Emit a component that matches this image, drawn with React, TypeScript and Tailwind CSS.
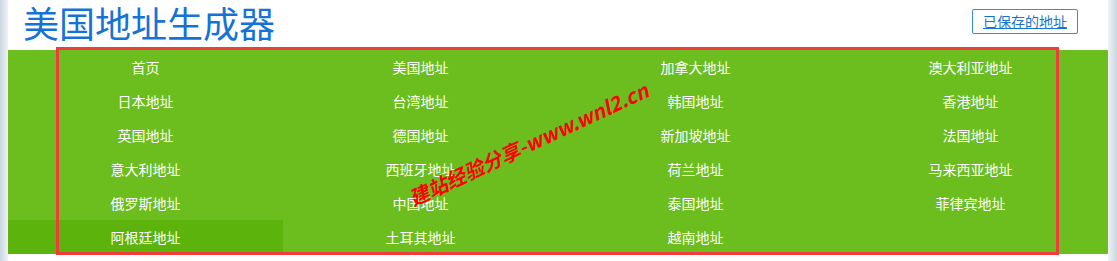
const countries = [
  '首页', '美国地址', '加拿大地址', '澳大利亚地址',
  '日本地址', '台湾地址', '韩国地址', '香港地址',
  '英国地址', '德国地址', '新加坡地址', '法国地址',
  '意大利地址', '西班牙地址', '荷兰地址', '马来西亚地址',
  '俄罗斯地址', '中国地址', '泰国地址', '菲律宾地址',
  '阿根廷地址', '土耳其地址', '越南地址',
];

export default function App() {
  return (
    <div
      className="relative flex h-[261px] w-[1117px] overflow-hidden bg-white"
      style={{ fontFamily: '"Noto Sans CJK SC", "Noto Sans", sans-serif' }}
    >
      <div className="w-2 shrink-0 bg-gradient-to-r from-[#c9d6e0] to-[#eef3f7]" />
      <div className="flex w-[1100px] flex-col">
        <div className="flex h-[50px] items-start justify-between pl-[15px] pr-[30px]">
          <h1 className="text-[36px] leading-[44px] font-normal text-[#1673d4]">
            美国地址生成器
          </h1>
          <a
            href="#"
            className="mt-[9px] flex h-[25px] items-center rounded-[2px] border border-[#3b8be0] px-[10px] text-[14px] text-[#1673d4] underline"
          >
            已保存的地址
          </a>
        </div>
        <div className="grid grid-cols-4 bg-[#6cbd1e]">
          {countries.map((name, i) => (
            <a
              key={name}
              href="#"
              className={
                'flex h-[34px] items-center justify-center text-[14px] text-white ' +
                (i === 20 ? 'bg-[#5cb30c]' : '')
              }
            >
              {name}
            </a>
          ))}
        </div>
      </div>
      <div className="w-[9px] shrink-0 bg-gradient-to-r from-[#eef3f7] to-[#c9d6e0]" />

      {/* annotation box */}
      <div className="pointer-events-none absolute top-[47px] left-[56px] h-[208px] w-[1003px] border-[3px] border-[#f23b3b]" />

      {/* watermark */}
      <div className="pointer-events-none absolute top-[134px] left-[398px] origin-center -rotate-[25deg] text-[20px] font-bold italic leading-none whitespace-nowrap text-[#ff0000]">
        建站经验分享-www.wnl2.cn
      </div>
    </div>
  );
}
